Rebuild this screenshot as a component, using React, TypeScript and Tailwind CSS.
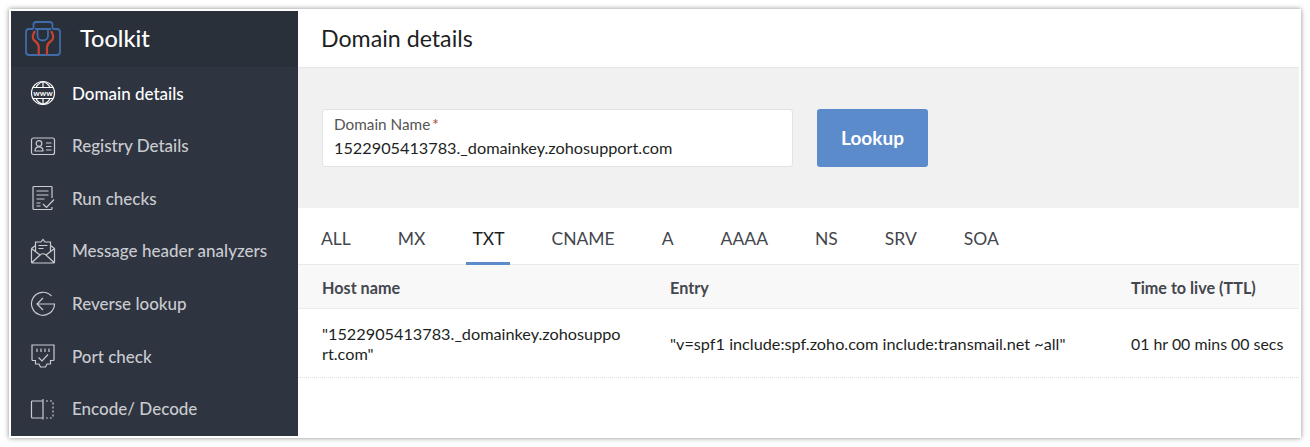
const iconClass = "h-[26px] w-[26px] fill-none stroke-current stroke-[1.2]";

function GlobeIcon() {
  return (
    <svg viewBox="0 0 26 26" className={iconClass}>
      <circle cx="13" cy="13" r="11.500" />
      <path d="M3 7.500h20M3 18.500h20" />
      <path d="M13 1.500C9 3 7 5 6 7.500M13 1.500c4 1.500 6 3.500 7 6M6 18.500c1 2.500 3 4.500 7 6M20 18.500c-1 2.500-3 4.500-7 6M13 1.500v6M13 18.500v6" />
      <text x="13" y="15.800" textAnchor="middle" className="fill-current stroke-none text-[8px] font-bold">
        www
      </text>
    </svg>
  );
}

function CardIcon() {
  return (
    <svg viewBox="0 0 26 26" className={iconClass}>
      <rect x="1.500" y="5" width="23" height="16.500" rx="2" />
      <circle cx="9" cy="10.500" r="2.800" />
      <path d="M5 18c0-5.500 8-5.500 8 0zM16 10h5.500M16 13.500h5.500M16 17h5.500" />
    </svg>
  );
}

function ChecksIcon() {
  return (
    <svg viewBox="0 0 26 26" className={iconClass}>
      <path d="M22 13V2.500a1 1 0 0 0-1-1H4a1 1 0 0 0-1 1v21a1 1 0 0 0 1 1h17a1 1 0 0 0 1-1V22" />
      <path d="M6.500 6h12M6.500 10h12M6.500 14h8M6.500 18h4M6.500 21h4M13 19l3.500 3.500L24 14.500" />
    </svg>
  );
}

function MailIcon() {
  return (
    <svg viewBox="0 0 26 26" className={iconClass}>
      <path d="M1.500 10.500V24a1 1 0 0 0 1 1h21a1 1 0 0 0 1-1V10.500l-4-3M1.500 10.500l4-3M1.500 10.500 10 17M24.500 10.500 16 17M2 24.500 10 17q3-2.500 6 0l8 7.500" />
      <path d="M5.500 14V4h5.500l2-2.500L15 4h5.500v10" />
      <path d="M8.500 7.500h9M8.500 10.500h5" />
    </svg>
  );
}

function ReverseIcon() {
  return (
    <svg viewBox="0 0 26 26" className={iconClass}>
      <path d="M21.500 5A11.500 11.500 0 1 0 24.500 13H7M13 7l-6 6 6 6" />
    </svg>
  );
}

function PortIcon() {
  return (
    <svg viewBox="0 0 26 26" className={iconClass}>
      <path d="M2 2h22v14.500q0 1-1 1h-2.500V21H17l-1.500 3h-5L9 21H5.500v-3.500H3q-1 0-1-1z" />
      <path d="M7 5.500v3.500M11 5.500v3.500M15 5.500v3.500M19 5.500v3.500M8.500 14.500l3.500 3.500 6-6.500" />
    </svg>
  );
}

function EncodeIcon() {
  return (
    <svg viewBox="0 0 26 26" className={iconClass}>
      <path d="M13 5H2.500a1 1 0 0 0-1 1v15a1 1 0 0 0 1 1H13" />
      <path d="M13 3v20.500" />
      <path d="M16 5h6a1 1 0 0 1 1 1v15a1 1 0 0 1-1 1h-6" strokeDasharray="2 2" />
    </svg>
  );
}

const navItems = [
  { label: "Domain details", icon: <GlobeIcon />, active: true },
  { label: "Registry Details", icon: <CardIcon /> },
  { label: "Run checks", icon: <ChecksIcon /> },
  { label: "Message header analyzers", icon: <MailIcon /> },
  { label: "Reverse lookup", icon: <ReverseIcon /> },
  { label: "Port check", icon: <PortIcon /> },
  { label: "Encode/ Decode", icon: <EncodeIcon /> },
];

const tabs = ["ALL", "MX", "TXT", "CNAME", "A", "AAAA", "NS", "SRV", "SOA"];

function Logo() {
  return (
    <svg viewBox="0 0 36 36" className="h-9 w-9 fill-none stroke-[1.800]">
      <path className="stroke-[#3f6cab]" d="M8.500 8V3.500a2.500 2.500 0 0 1 2.500-2.500h14a2.500 2.500 0 0 1 2.500 2.500V8" />
      <path className="stroke-[#3f6cab]" d="M8 8H4a3 3 0 0 0-3 3v20a3 3 0 0 0 3 3h28a3 3 0 0 0 3-3V11a3 3 0 0 0-3-3h-4" />
      <path
        className="stroke-[#c8432f] stroke-[2.200]"
        d="M10 10C7 14 7 18 10 20c3 2 3.700 3 3.700 6v8M26 10c3 4 3 8 0 10-3 2-4 3-4 6v8"
      />
      <path className="stroke-[#3f6cab]" d="M12.500 8v7c0 6 10.500 6 10.500 0V8M10 8h16" />
    </svg>
  );
}

function Sidebar() {
  return (
    <aside className="flex w-[287px] shrink-0 flex-col bg-[#2e3440]">
      <div className="flex h-14 items-center gap-[19px] bg-[#2a303a] pl-[14px]">
        <Logo />
        <span className="text-[23.500px] font-medium text-white">Toolkit</span>
      </div>
      <nav className="flex flex-1 flex-col">
        {navItems.map((item) => (
          <div
            key={item.label}
            className={
              item.active
                ? "flex h-[52.600px] items-center gap-4 pl-[19px] text-[17px] font-medium text-white"
                : "flex h-[52.600px] items-center gap-4 pl-[19px] text-[17px] font-medium text-[#c9cbcf]"
            }
          >
            {item.icon}
            <span>{item.label}</span>
          </div>
        ))}
      </nav>
    </aside>
  );
}

export default function App() {
  return (
    <div className="h-[447px] w-[1310px] bg-white pl-[9px] pt-[9px] font-['Lato',sans-serif]">
      <div className="flex h-[429px] w-[1292px] border-2 border-white shadow-[0_0_5px_rgba(0,0,0,0.45)]">
        <Sidebar />
        <main className="flex min-w-0 flex-1 flex-col bg-white">
          <header className="flex h-[57px] items-center border-b border-[#e6e6e6] pb-px pl-[23px] text-[23.200px] text-[#1d1f23]">
            Domain details
          </header>
          <section className="flex h-[140px] items-center gap-6 bg-[#f1f1f1] pl-6">
            <div className="flex h-[58px] w-[471px] flex-col rounded-[3px] border border-[#e2e2e2] bg-white pl-[11px] pt-1">
              <label className="text-[15.300px] leading-5 text-[#555]">
                Domain Name<span className="ml-0.5 text-[#a5432f]">*</span>
              </label>
              <span className="mt-0.5 text-[16.250px] leading-6 text-[#1d1f23]">
                1522905413783._domainkey.zohosupport.com
              </span>
            </div>
            <button className="h-[58px] w-[111px] rounded-[3px] bg-[#5b8bcb] text-[19px] font-bold text-white">
              Lookup
            </button>
          </section>
          <div className="flex h-[57px] gap-[35px] border-b border-[#e9e9e9] pl-[17px]">
            {tabs.map((tab) => (
              <div
                key={tab}
                className={
                  tab === "TXT"
                    ? "-mb-px flex items-center border-b-[3px] border-[#5b8bcb] px-1.5 pt-[9px] text-[17.500px] text-[#1d1f23]"
                    : "-mb-px flex items-center border-b-[3px] border-transparent px-1.5 pt-[9px] text-[17.500px] text-[#44474d]"
                }
              >
                {tab}
              </div>
            ))}
          </div>
          <div className="grid h-[44px] grid-cols-[348px_461px_1fr] items-center border-b border-[#ececec] bg-[#f8f8f8] pl-6 pt-[3px] text-[16.200px] font-bold text-[#44474d]">
            <span>Host name</span>
            <span>Entry</span>
            <span>Time to live (TTL)</span>
          </div>
          <div className="grid h-[69px] grid-cols-[348px_461px_1fr] items-center border-b border-dotted border-[#dcdcdc] pl-6 pt-px text-[16.250px] leading-5 text-[#1d1f23]">
            <span className="w-[302px] break-all">"1522905413783._domainkey.zohosupport.com"</span>
            <span>"v=spf1 include:spf.zoho.com include:transmail.net ~all"</span>
            <span className="whitespace-nowrap text-[15.900px]">01 hr 00 mins 00 secs</span>
          </div>
        </main>
      </div>
    </div>
  );
}
